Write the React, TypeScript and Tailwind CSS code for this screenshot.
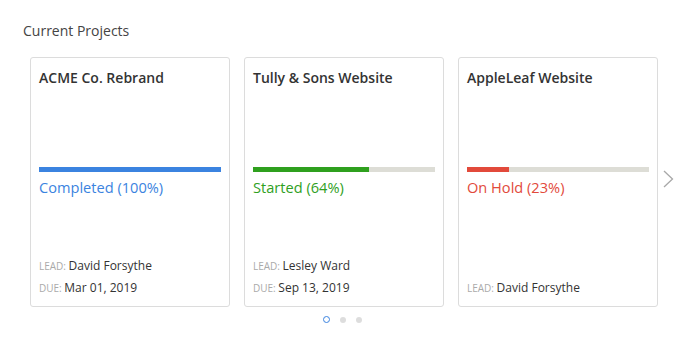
const PROJECTS = [
  {
    name: 'ACME Co. Rebrand',
    status: 'Completed',
    pct: 100,
    bar: 'bg-[#3b83e0]',
    text: 'text-[#3b83e0]',
    lead: 'David Forsythe',
    due: 'Mar 01, 2019',
  },
  {
    name: 'Tully & Sons Website',
    status: 'Started',
    pct: 64,
    bar: 'bg-[#2fa01e]',
    text: 'text-[#2fa01e]',
    lead: 'Lesley Ward',
    due: 'Sep 13, 2019',
  },
  {
    name: 'AppleLeaf Website',
    status: 'On Hold',
    pct: 23,
    bar: 'bg-[#e24a3b]',
    text: 'text-[#e24a3b]',
    lead: 'David Forsythe',
    due: null,
  },
];

function ProjectCard({ project }: { project: (typeof PROJECTS)[number] }) {
  return (
    <div className="flex h-[250px] w-[200px] flex-col rounded-[3px] border border-[#dcdcdc] bg-white px-2 pb-[7px] pt-[10px]">
      <div className="h-5 text-[14px] font-semibold leading-5 text-[#333]">{project.name}</div>

      <div className="mt-[79px] h-[5px] w-full bg-[#ddddd6]">
        <div className={`h-full ${project.bar}`} style={{ width: `${project.pct}%` }} />
      </div>
      <div className={`mt-[5px] text-[14.6px] leading-5 ${project.text}`}>
        {project.status} ({project.pct}%)
      </div>

      <div className="mt-auto">
        <div className="text-[12px] leading-[21px] text-[#333]">
          <span className="text-[10px] uppercase text-[#aaa]">Lead: </span>
          {project.lead}
        </div>
        {project.due && (
          <div className="text-[12px] leading-[21px] text-[#333]">
            <span className="text-[10px] uppercase text-[#aaa]">Due: </span>
            {project.due}
          </div>
        )}
      </div>
    </div>
  );
}

export default function App() {
  return (
    <div
      className="h-[345px] w-[691px] bg-white pl-[23px] pt-[21px]"
      style={{ fontFamily: '"Open Sans", "Liberation Sans", sans-serif' }}
    >
      <div className="text-[14px] leading-5 text-[#444]">Current Projects</div>

      <div className="ml-[7px] mt-4 flex">
        <div className="flex flex-col">
          <div className="flex gap-[14px]">
            {PROJECTS.map((p) => (
              <ProjectCard key={p.name} project={p} />
            ))}
          </div>

          {/* Pager dots */}
          <div className="mr-[4px] mt-[9px] flex items-center justify-center gap-[10px]">
            <div className="h-[7px] w-[7px] rounded-full border-[1.5px] border-[#3b83e0]" />
            <div className="h-[6px] w-[6px] rounded-full bg-[#dddddd]" />
            <div className="h-[6px] w-[6px] rounded-full bg-[#dddddd]" />
          </div>
        </div>

        <div className="ml-[5px] mt-[113px]">
          <svg width="12" height="18" viewBox="0 0 12 18" fill="none">
            <polyline points="1,1 9.5,9 1,17" stroke="#a8a8a8" strokeWidth="1.3" />
          </svg>
        </div>
      </div>
    </div>
  );
}
